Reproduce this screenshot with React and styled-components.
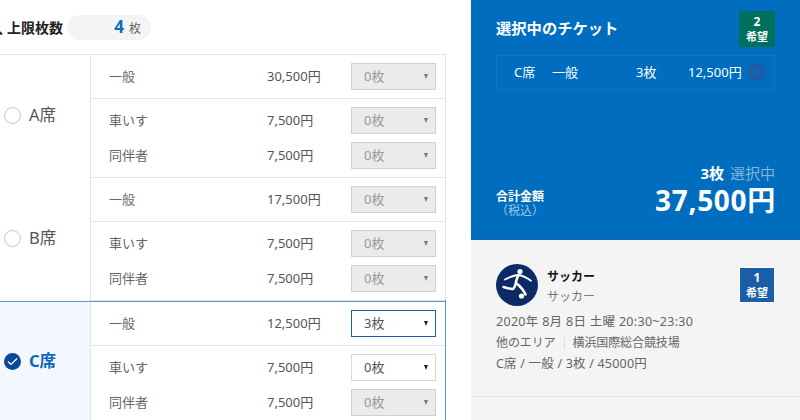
import styled, { createGlobalStyle } from "styled-components";

const GlobalStyle = createGlobalStyle`
  html, body {
    margin: 0;
    padding: 0;
    background: #fff;
    overflow: hidden;
  }
  body {
    font-family: "Noto Sans", "Noto Sans CJK JP", sans-serif;
    color: #555;
  }
`;

const Page = styled.div`
  display: flex;
  width: 800px;
  height: 420px;
  overflow: hidden;
`;

const LeftPanel = styled.div`
  width: 471px;
  flex: none;
  overflow: hidden;
`;

const LimitBar = styled.div`
  display: flex;
  align-items: center;
  height: 54px;
  margin-left: -25px;
  gap: 4px;
`;

const LimitLabel = styled.span`
  font-size: 14px;
  font-weight: 700;
  color: #222;
  white-space: nowrap;
`;

const LimitPrefix = styled.span`
  margin-right: 4px;
`;

const LimitPill = styled.div`
  display: flex;
  align-items: baseline;
  justify-content: flex-end;
  gap: 5px;
  width: 84px;
  height: 25px;
  line-height: 24px;
  padding-right: 10px;
  box-sizing: border-box;
  border-radius: 13px;
  background: #f4f4f4;
  font-size: 12px;
  color: #666;
`;

const LimitNumber = styled.b`
  font-size: 17px;
  color: #0a6dbd;
`;

const Table = styled.div`
  width: 446px;
  border-top: 1px solid #e4e4e4;
`;

const SeatGroup = styled.div`
  display: flex;
  border-right: 1px solid ${(p) => (p.$selected ? "#4f9bd6" : "#e4e4e4")};
  border-top: ${(p) => (p.$selected ? "2px solid #4f9bd6" : "none")};
  margin-top: ${(p) => (p.$selected ? "-1px" : "0")};
`;

const SeatCell = styled.div`
  display: flex;
  align-items: center;
  gap: 8px;
  width: 91px;
  flex: none;
  box-sizing: border-box;
  padding: 0 0 ${(p) => (p.$selected ? "5px" : "3px")} 4px;
  border-right: 1px solid #e4e4e4;
  background: ${(p) => (p.$selected ? "#f3f8fe" : "#fff")};
`;

const Radio = styled.span`
  display: flex;
  align-items: center;
  justify-content: center;
  width: 17px;
  height: 17px;
  box-sizing: border-box;
  border-radius: 50%;
  border: ${(p) => (p.$selected ? "none" : "1.5px solid #c4c4c4")};
  background: ${(p) => (p.$selected ? "#0b4a96" : "#fff")};
`;

const SeatName = styled.span`
  font-size: 16.5px;
  padding-bottom: 2px;
  font-weight: ${(p) => (p.$selected ? 700 : 400)};
  color: ${(p) => (p.$selected ? "#0a66b8" : "#555")};
`;

const Rows = styled.div`
  flex: 1;
  min-width: 0;
`;

const RowBlock = styled.div`
  display: flex;
  flex-direction: column;
  gap: 8px;
  padding: 8px 0;
  border-bottom: 1px solid #e4e4e4;
`;

const Row = styled.div`
  display: flex;
  align-items: center;
  height: 27px;
  padding: 0 9px 0 18px;
`;

const RowLabel = styled.span`
  flex: 1;
  font-size: 13px;
  color: #666;
  padding-bottom: 2px;
`;

const Price = styled.span`
  width: 84px;
  font-size: 13px;
  color: #555;
  padding-bottom: 2px;
`;

const Select = styled.div`
  display: flex;
  align-items: center;
  justify-content: space-between;
  width: 85px;
  height: 27px;
  box-sizing: border-box;
  padding: 0 7px 2px 12px;
  font-size: 13px;
  border: 1px solid ${(p) => (p.$focus ? "#1f5ea8" : p.$off ? "#d0d0d0" : "#d8d8d8")};
  background: ${(p) => (p.$off ? "#ebebeb" : "#fff")};
  color: ${(p) => (p.$off ? "#999" : "#555")};
  &::after {
    content: "";
    margin-top: 2px;
    border-left: 2.5px solid transparent;
    border-right: 2.5px solid transparent;
    border-top: 5px solid ${(p) => (p.$off ? "#777" : "#222")};
  }
`;

const RightPanel = styled.div`
  flex: 1;
  display: flex;
  flex-direction: column;
  background: #f4f4f4;
`;

const BluePanel = styled.div`
  display: flex;
  flex-direction: column;
  height: 240px;
  box-sizing: border-box;
  padding: 11px 25px 0;
  background: #006dbf;
  border-bottom: 1px solid #1a5fb0;
  color: #fff;
`;

const BlueHead = styled.div`
  display: flex;
  align-items: center;
  justify-content: space-between;
`;

const BlueTitle = styled.h2`
  margin: 0 0 5px;
  font-size: 15.3px;
  font-weight: 700;
`;

const Badge = styled.div`
  display: flex;
  flex-direction: column;
  align-items: center;
  justify-content: center;
  width: 36px;
  height: 36px;
  box-sizing: border-box;
  background: ${(p) => p.$bg};
  border: ${(p) => (p.$outlined ? "1px solid #fff" : "none")};
  color: #fff;
  font-size: 11px;
  font-weight: 700;
  line-height: 15px;
`;

const BadgeNumber = styled.span`
  font-size: 12px;
`;

const TicketLine = styled.div`
  display: flex;
  align-items: center;
  height: 35px;
  margin-top: 8px;
  box-sizing: border-box;
  padding-left: 17px;
  border: 1px solid #1076c4;
  font-size: 13px;
`;

const TicketSeat = styled.span`
  width: 38px;
  padding-bottom: 3px;
`;

const TicketType = styled.span`
  width: 84px;
  padding-bottom: 3px;
`;

const TicketCount = styled.span`
  width: 52px;
  padding-bottom: 3px;
`;

const TicketPrice = styled.span`
  width: 60px;
  padding-bottom: 3px;
`;

const RemoveButton = styled.span`
  display: flex;
  align-items: center;
  justify-content: center;
  width: 18px;
  height: 18px;
  margin-bottom: 1px;
  border-radius: 50%;
  background: #1f5aa6;
`;

const Totals = styled.div`
  display: flex;
  align-items: flex-end;
  justify-content: space-between;
  margin-top: auto;
  padding-bottom: 21px;
`;

const TotalLabel = styled.div`
  display: flex;
  flex-direction: column;
  align-items: center;
  font-size: 12px;
  font-weight: 700;
  line-height: 14px;
`;

const TaxNote = styled.span`
  font-weight: 400;
  color: #9cc6e8;
`;

const TotalRight = styled.div`
  display: flex;
  flex-direction: column;
  align-items: flex-end;
`;

const CountLine = styled.div`
  font-size: 15px;
  line-height: 20px;
  font-weight: 700;
  margin-bottom: -1px;
`;

const Selecting = styled.span`
  font-weight: 400;
  color: #86b4dc;
  margin-left: 6px;
`;

const TotalPrice = styled.div`
  font-size: 28px;
  letter-spacing: 0.7px;
  margin-right: -1px;
  line-height: 36px;
  font-weight: 700;
`;

const EventCard = styled.div`
  padding: 24px 25px 0;
  height: 157px;
  box-sizing: border-box;
  border-bottom: 1px solid #e2e2e2;
`;

const EventHead = styled.div`
  display: flex;
  align-items: center;
  gap: 9px;
`;

const EventNames = styled.div`
  flex: 1;
  display: flex;
  flex-direction: column;
  gap: 3px;
  padding-top: 3px;
`;

const EventName = styled.b`
  font-size: 12px;
  line-height: 16px;
  color: #111;
`;

const EventSub = styled.span`
  font-size: 12px;
  line-height: 17px;
  color: #777;
`;

const EventLine = styled.div`
  display: flex;
  align-items: center;
  font-size: ${(p) => p.$size || 12.5}px;
  letter-spacing: ${(p) => p.$spacing || 0}px;
  line-height: 21px;
  color: #666;
  white-space: nowrap;
`;

const EventLines = styled.div`
  margin-top: 5px;
`;

const Separator = styled.span`
  width: 1px;
  height: 12px;
  margin: 0 8px;
  background: #ddd;
`;

const SoccerIcon = () => (
  <svg width="42" height="42" viewBox="0 0 42 42">
    <circle cx="21" cy="21" r="21" fill="#0b2a66" />
    <circle cx="24" cy="7.5" r="2.6" fill="#fff" />
    <circle cx="25.5" cy="32" r="2.6" fill="#fff" />
    <path
      d="M9 15.5 C14 13 18 11.2 22.5 11 C27 11.5 31 14 35 16.8"
      fill="none"
      stroke="#fff"
      strokeWidth="1.8"
      strokeLinecap="round"
    />
    <path
      d="M22 12 C21 15 19.5 17 20 19 C24 22 27 25 29.5 30.5"
      fill="none"
      stroke="#fff"
      strokeWidth="2.6"
      strokeLinecap="round"
    />
    <path
      d="M20 19 C19 22 18 24.5 17 25 C14 24.8 10.5 24 7.5 23"
      fill="none"
      stroke="#fff"
      strokeWidth="2.4"
      strokeLinecap="round"
    />
  </svg>
);

const seats = [
  { name: "A席", prices: ["30,500円", "7,500円", "7,500円"] },
  { name: "B席", prices: ["17,500円", "7,500円", "7,500円"] },
  {
    name: "C席",
    selected: true,
    prices: ["12,500円", "7,500円", "7,500円"],
    selects: [
      { text: "3枚", focus: true },
      { text: "0枚" },
      { text: "0枚", off: true },
    ],
  },
];

const offSelect = { text: "0枚", off: true };

const TicketRow = ({ label, price, select }) => (
  <Row>
    <RowLabel>{label}</RowLabel>
    <Price>{price}</Price>
    <Select $off={select.off} $focus={select.focus}>
      {select.text}
    </Select>
  </Row>
);

const Seat = ({ seat }) => {
  const selects = seat.selects || [offSelect, offSelect, offSelect];
  return (
    <SeatGroup $selected={seat.selected}>
      <SeatCell $selected={seat.selected}>
        <Radio $selected={seat.selected}>
          {seat.selected && (
            <svg width="11" height="9" viewBox="0 0 11 9">
              <path d="M1 4.5 L4 7.5 L10 1.5" fill="none" stroke="#fff" strokeWidth="1.2" />
            </svg>
          )}
        </Radio>
        <SeatName $selected={seat.selected}>{seat.name}</SeatName>
      </SeatCell>
      <Rows>
        <RowBlock>
          <TicketRow label="一般" price={seat.prices[0]} select={selects[0]} />
        </RowBlock>
        <RowBlock>
          <TicketRow label="車いす" price={seat.prices[1]} select={selects[1]} />
          <TicketRow label="同伴者" price={seat.prices[2]} select={selects[2]} />
        </RowBlock>
      </Rows>
    </SeatGroup>
  );
};

const App = () => {
  return (
    <Page>
      <GlobalStyle />
      <LeftPanel>
        <LimitBar>
          <LimitLabel>
            <LimitPrefix>購入</LimitPrefix>上限枚数
          </LimitLabel>
          <LimitPill>
            <LimitNumber>4</LimitNumber>枚
          </LimitPill>
        </LimitBar>
        <Table>
          {seats.map((seat) => (
            <Seat key={seat.name} seat={seat} />
          ))}
        </Table>
      </LeftPanel>
      <RightPanel>
        <BluePanel>
          <BlueHead>
            <BlueTitle>選択中のチケット</BlueTitle>
            <Badge $bg="#00705c">
              <BadgeNumber>2</BadgeNumber>
              希望
            </Badge>
          </BlueHead>
          <TicketLine>
            <TicketSeat>C席</TicketSeat>
            <TicketType>一般</TicketType>
            <TicketCount>3枚</TicketCount>
            <TicketPrice>12,500円</TicketPrice>
            <RemoveButton>
              <svg width="9" height="9" viewBox="0 0 9 9">
                <path d="M1 1 L8 8 M8 1 L1 8" stroke="#0a6dbd" strokeWidth="1.2" />
              </svg>
            </RemoveButton>
          </TicketLine>
          <Totals>
            <TotalLabel>
              合計金額
              <TaxNote>（税込）</TaxNote>
            </TotalLabel>
            <TotalRight>
              <CountLine>
                3枚<Selecting>選択中</Selecting>
              </CountLine>
              <TotalPrice>37,500円</TotalPrice>
            </TotalRight>
          </Totals>
        </BluePanel>
        <EventCard>
          <EventHead>
            <SoccerIcon />
            <EventNames>
              <EventName>サッカー</EventName>
              <EventSub>サッカー</EventSub>
            </EventNames>
            <Badge $bg="#1a5ea8" $outlined>
              <BadgeNumber>1</BadgeNumber>
              希望
            </Badge>
          </EventHead>
          <EventLines>
            <EventLine $spacing={0.3}>2020年 8月 8日 土曜 20:30~23:30</EventLine>
            <EventLine $size={12} $spacing={-0.1}>
              他のエリア
              <Separator />
              横浜国際総合競技場
            </EventLine>
            <EventLine $spacing={0.2}>C席 / 一般 / 3枚 / 45000円</EventLine>
          </EventLines>
        </EventCard>
      </RightPanel>
    </Page>
  );
};

export default App;
